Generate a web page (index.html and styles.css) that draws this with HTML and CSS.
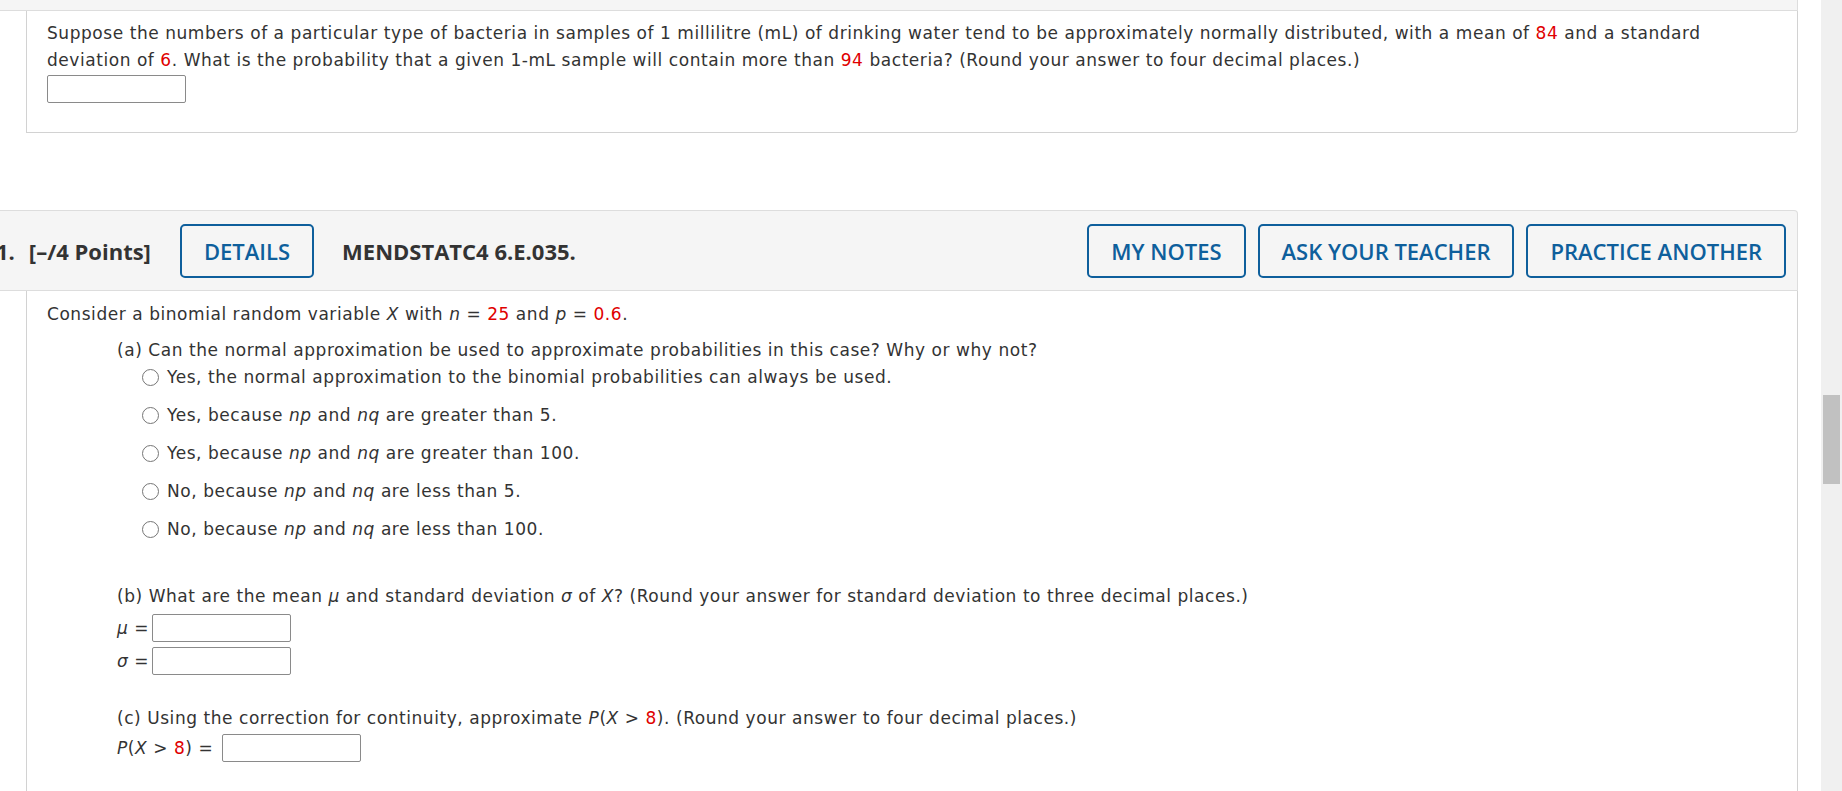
FILE: index.html
```html
<!DOCTYPE html>
<html lang="en">
<head>
<meta charset="utf-8">
<title>Question</title>
<link rel="stylesheet" href="styles.css">
</head>
<body>
<div class="window">
  <main class="page">
    <section class="q q-first">
      <div class="q-head q-head-cut"></div>
      <div class="q-body q-body-first">
        <p class="line">Suppose the numbers of a particular type of bacteria in samples of 1 millilitre (mL) of drinking water tend to be approximately normally distributed, with a mean of <span class="red">84</span> and a standard deviation of <span class="red">6</span>. What is the probability that a given 1-mL sample will contain more than <span class="red">94</span> bacteria? (Round your answer to four decimal places.)</p>
        <div class="answer-row first-answer"><span class="box"></span></div>
      </div>
    </section>

    <section class="q q-second">
      <div class="q-head">
        <span class="qnum">1.</span>
        <span class="points">[&ndash;/4 Points]</span>
        <button class="btn">DETAILS</button>
        <span class="qid">MENDSTATC4 6.E.035.</span>
        <div class="head-actions">
          <button class="btn">MY NOTES</button>
          <button class="btn">ASK YOUR TEACHER</button>
          <button class="btn">PRACTICE ANOTHER</button>
        </div>
      </div>
      <div class="q-body q-body-second">
        <p class="line">Consider a binomial random variable <i>X</i> with <i>n</i> = <span class="red">25</span> and <i>p</i> = <span class="red">0.6</span>.</p>

        <div class="part part-a">
          <p class="line">(a) Can the normal approximation be used to approximate probabilities in this case? Why or why not?</p>
          <ul class="choices">
            <li class="choice"><span class="radio"></span><span class="ctext">Yes, the normal approximation to the binomial probabilities can always be used.</span></li>
            <li class="choice"><span class="radio"></span><span class="ctext">Yes, because <i>np</i> and <i>nq</i> are greater than 5.</span></li>
            <li class="choice"><span class="radio"></span><span class="ctext">Yes, because <i>np</i> and <i>nq</i> are greater than 100.</span></li>
            <li class="choice"><span class="radio"></span><span class="ctext">No, because <i>np</i> and <i>nq</i> are less than 5.</span></li>
            <li class="choice"><span class="radio"></span><span class="ctext">No, because <i>np</i> and <i>nq</i> are less than 100.</span></li>
          </ul>
        </div>

        <div class="part part-b">
          <p class="line">(b) What are the mean <i>&mu;</i> and standard deviation <i>&sigma;</i> of <i>X</i>? (Round your answer for standard deviation to three decimal places.)</p>
          <div class="answer-row ans-mu"><span class="lbl"><i>&mu;</i> =</span><span class="box"></span></div>
          <div class="answer-row ans-sigma"><span class="lbl"><i>&sigma;</i> =</span><span class="box"></span></div>
        </div>

        <div class="part part-c">
          <p class="line">(c) Using the correction for continuity, approximate <i>P</i>(<i>X</i> &gt; <span class="red">8</span>). (Round your answer to four decimal places.)</p>
          <div class="answer-row ans-p"><span class="lbl lbl-wide"><i>P</i>(<i>X</i> &gt; <span class="red">8</span>) =</span><span class="box"></span></div>
        </div>
      </div>
    </section>
  </main>
  <div class="scrollbar"><div class="thumb"></div></div>
</div>
</body>
</html>
```

FILE: styles.css
```css
html, body {
  margin: 0;
  padding: 0;
  background: #ffffff;
}

.window {
  display: flex;
  width: 1842px;
  height: 791px;
  overflow: hidden;
}

.page {
  flex: 1;
  min-width: 0;
  overflow: hidden;
  font-family: "DejaVu Sans", Verdana, sans-serif;
  font-size: 17px;
  letter-spacing: 0.55px;
  color: #333333;
}

.q {
  margin-right: 23px;
}

.q-second {
  margin-top: 77px;
}

.q-head {
  margin-left: -40px;
  background: #f5f5f5;
  border: 1px solid #dddddd;
  border-left: none;
  border-top-right-radius: 4px;
}

.q-head-cut {
  height: 10px;
  border-top: none;
  border-radius: 0;
}

.q-second .q-head {
  display: flex;
  align-items: center;
  padding: 13px 11px 12px 36px;
  font-family: "Open Sans", "Liberation Sans", sans-serif;
  font-size: 22px;
  letter-spacing: 0;
}

.qnum {
  font-weight: 700;
  margin-right: 14px;
}

.points {
  font-weight: 700;
  margin-right: 29px;
}

.qid {
  font-weight: 700;
  margin-left: 28px;
}

.head-actions {
  margin-left: auto;
  display: flex;
  gap: 12px;
}

.btn {
  height: 54px;
  padding: 0 22px;
  border: 2px solid #0e5f9c;
  border-radius: 5px;
  background: transparent;
  color: #0e5f9c;
  font-family: "Open Sans", "Liberation Sans", sans-serif;
  font-size: 22px;
  font-weight: 600;
  letter-spacing: 0;
}

.q-body {
  margin-left: 26px;
  border: 1px solid #d2d2d2;
  border-top: none;
  border-bottom-right-radius: 4px;
  padding: 0 20px;
}

.q-body-first {
  padding-top: 9px;
  padding-bottom: 29px;
  padding-right: 70px;
}

.q-body-second {
  padding-top: 10px;
  padding-bottom: 40px;
}

.line {
  margin: 0;
  line-height: 27px;
}

.red {
  color: #e00000;
}

.box {
  display: inline-block;
  width: 139px;
  height: 28px;
  box-sizing: border-box;
  border: 1px solid #8a8a8a;
  border-radius: 2px;
  background: #ffffff;
  vertical-align: middle;
}

.answer-row {
  display: flex;
  align-items: center;
  height: 28px;
}

.first-answer {
  margin-top: 1px;
}

.part {
  padding-left: 70px;
}

.part-a {
  margin-top: 9px;
}

.choices {
  list-style: none;
  margin: 0;
  padding: 0 0 0 25px;
}

.choice {
  display: flex;
  align-items: center;
  line-height: 27px;
  margin-top: 11px;
}

.choice:first-child {
  margin-top: 0;
}

.radio {
  width: 17px;
  height: 17px;
  box-sizing: border-box;
  border: 1.5px solid #767676;
  border-radius: 50%;
  margin-right: 8px;
  flex: none;
}

.part-b {
  margin-top: 40px;
}

.ans-mu {
  margin-top: 4px;
}

.ans-sigma {
  margin-top: 5px;
}

.lbl {
  white-space: pre;
  margin-right: 3px;
}

.lbl-wide {
  margin-right: 9px;
}

.part-c {
  margin-top: 30px;
}

.ans-p {
  margin-top: 2px;
}

.scrollbar {
  width: 21px;
  flex: none;
  background: #f0f0f0;
}

.thumb {
  width: 17px;
  height: 89px;
  margin: 395px 0 0 2px;
  background: #c1c1c1;
}
```
